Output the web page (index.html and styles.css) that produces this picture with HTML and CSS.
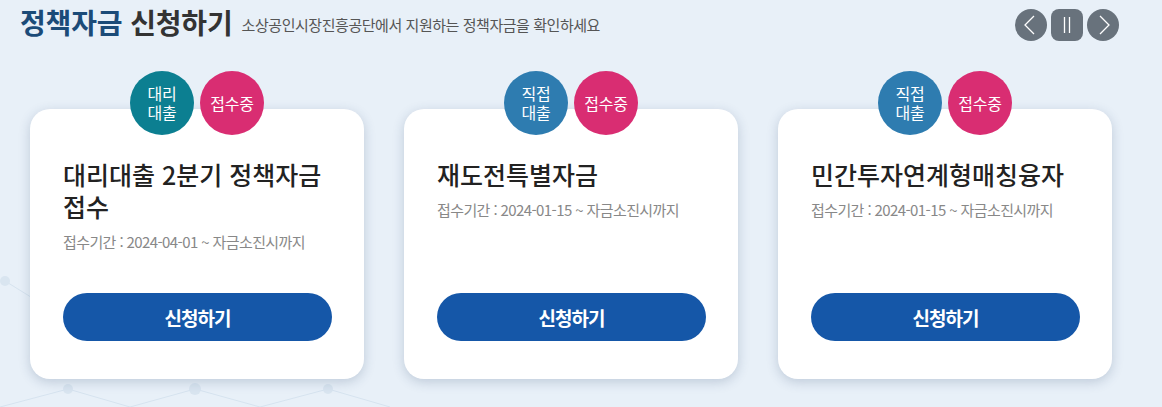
FILE: index.html
```html
<!DOCTYPE html>
<html lang="ko">
<head>
<meta charset="utf-8">
<link rel="stylesheet" href="styles.css">
</head>
<body>
<div class="page">
  <svg class="bg-net" width="1162" height="407" viewBox="0 0 1162 407">
    <g stroke="#d6e3ef" stroke-width="1" fill="none">
      <line x1="5" y1="281" x2="68" y2="320"/>
      <line x1="0" y1="407" x2="68" y2="389"/>
      <line x1="68" y1="389" x2="130" y2="407"/>
      <line x1="195" y1="389" x2="130" y2="407"/>
      <line x1="195" y1="389" x2="260" y2="407"/>
      <line x1="328" y1="389" x2="260" y2="407"/>
      <line x1="328" y1="389" x2="390" y2="407"/>
    </g>
    <g fill="#d9e5f0">
      <circle cx="5" cy="281" r="5"/>
      <circle cx="68" cy="389" r="5"/>
      <circle cx="195" cy="389" r="6"/>
      <circle cx="328" cy="389" r="5"/>
    </g>
  </svg>
  <header class="head">
    <h1 class="head-title"><span class="hl">정책자금</span> 신청하기</h1>
    <p class="head-sub">소상공인시장진흥공단에서 지원하는 정책자금을 확인하세요</p>
    <div class="ctrls">
      <button class="ctrl round" aria-label="이전">
        <svg width="32" height="32" viewBox="0 0 32 32"><path d="M19 7 L10 16 L19 25" fill="none" stroke="#fff" stroke-width="1.3"/></svg>
      </button>
      <button class="ctrl square" aria-label="정지">
        <svg width="32" height="32" viewBox="0 0 32 32"><path d="M13.5 8 V24 M18.5 8 V24" fill="none" stroke="#fff" stroke-width="1.3"/></svg>
      </button>
      <button class="ctrl round" aria-label="다음">
        <svg width="32" height="32" viewBox="0 0 32 32"><path d="M13 7 L22 16 L13 25" fill="none" stroke="#fff" stroke-width="1.3"/></svg>
      </button>
    </div>
  </header>

  <div class="cards">
    <div class="card">
      <div class="badges">
        <span class="badge teal">대리<br>대출</span>
        <span class="badge pink">접수중</span>
      </div>
      <h2 class="card-title">대리대출 2분기 정책자금<br>접수</h2>
      <p class="card-date">접수기간 : 2024-04-01 ~ 자금소진시까지</p>
      <a class="btn" href="#">신청하기</a>
    </div>
    <div class="card">
      <div class="badges">
        <span class="badge blue">직접<br>대출</span>
        <span class="badge pink">접수중</span>
      </div>
      <h2 class="card-title">재도전특별자금</h2>
      <p class="card-date">접수기간 : 2024-01-15 ~ 자금소진시까지</p>
      <a class="btn" href="#">신청하기</a>
    </div>
    <div class="card">
      <div class="badges">
        <span class="badge blue">직접<br>대출</span>
        <span class="badge pink">접수중</span>
      </div>
      <h2 class="card-title">민간투자연계형매칭융자</h2>
      <p class="card-date">접수기간 : 2024-01-15 ~ 자금소진시까지</p>
      <a class="btn" href="#">신청하기</a>
    </div>
  </div>
</div>
</body>
</html>
```
FILE: styles.css
```css
* { box-sizing: border-box; }
html, body { margin: 0; padding: 0; }
body {
  background: #e8f0f8;
  font-family: "Noto Sans CJK KR", "Noto Sans", sans-serif;
  width: 1162px;
  height: 407px;
  overflow: hidden;
}
.page {
  position: relative;
  width: 1162px;
  height: 407px;
}
.bg-net {
  position: absolute;
  left: 0;
  top: 0;
  z-index: 0;
}
.head {
  position: relative;
  z-index: 1;
  display: flex;
  align-items: center;
  height: 44px;
  padding: 0 43px 0 20px;
  margin-bottom: 27px;
}
.head-title {
  margin: 0;
  font-size: 28px;
  font-weight: 700;
  letter-spacing: -0.15px;
  color: #333;
  line-height: 40px;
}
.hl { color: #1b4b78; }
.head-sub {
  margin: 6px 0 0 9px;
  font-size: 15px;
  letter-spacing: -0.45px;
  color: #555;
  line-height: 20px;
}
.ctrls {
  margin-left: auto;
  display: flex;
  gap: 4px;
  margin-top: 6px;
}
.ctrl {
  width: 32px;
  height: 32px;
  padding: 0;
  border: 0;
  background: #68727c;
  display: flex;
  align-items: center;
  justify-content: center;
}
.ctrl.round { border-radius: 50%; }
.ctrl.square { border-radius: 8px; }
.cards {
  position: relative;
  z-index: 1;
  display: flex;
  gap: 40px;
  padding: 38px 0 0 30px;
}
.card {
  position: relative;
  width: 334px;
  height: 270px;
  background: #fff;
  border-radius: 20px;
  box-shadow: 0 3px 12px rgba(40, 70, 110, 0.22);
  padding: 49px 32px 38px 33px;
  display: flex;
  flex-direction: column;
}
.badges {
  position: absolute;
  top: -38px;
  left: 0;
  right: 0;
  display: flex;
  justify-content: center;
  gap: 6px;
}
.badge {
  width: 64px;
  height: 64px;
  border-radius: 50%;
  color: #fff;
  font-size: 16px;
  line-height: 19px;
  letter-spacing: -0.3px;
  display: flex;
  align-items: center;
  justify-content: center;
  text-align: center;
}
.teal { background: #0c7f91; }
.blue { background: #2e7cb0; }
.pink { background: #d92d72; }
.card-title {
  margin: 0;
  font-size: 25px;
  font-weight: 500;
  line-height: 32px;
  letter-spacing: 0;
  color: #222;
}
.card-date {
  margin: 10px 0 0;
  font-size: 15px;
  line-height: 20px;
  letter-spacing: -0.6px;
  color: #888;
}
.btn {
  margin-top: auto;
  height: 48px;
  border-radius: 24px;
  background: #1557a8;
  color: #fff;
  text-decoration: none;
  font-size: 19px;
  font-weight: 700;
  letter-spacing: -1px;
  display: flex;
  align-items: center;
  justify-content: center;
}
```
